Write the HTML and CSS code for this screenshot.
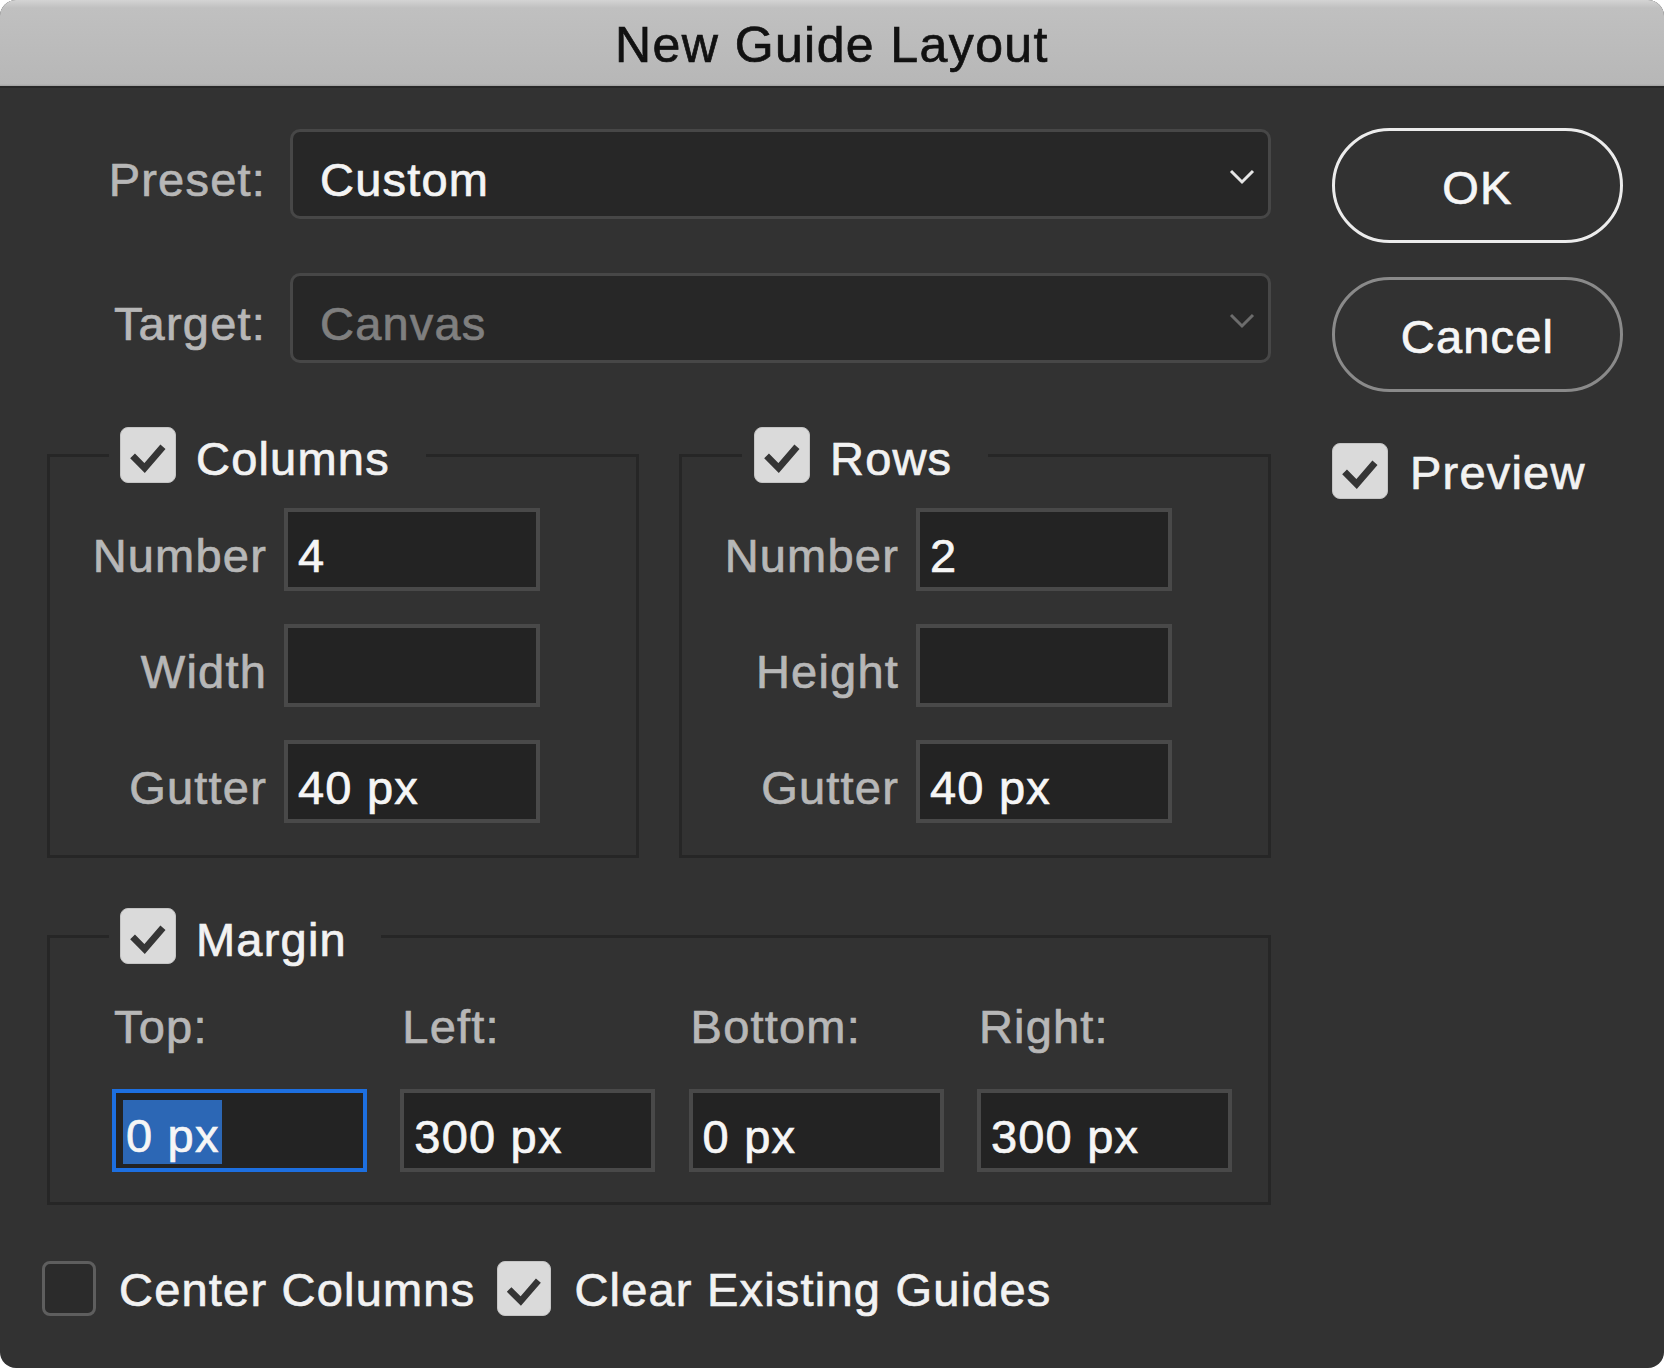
FILE: index.html
```html
<!DOCTYPE html>
<html lang="en">
<head>
<meta charset="utf-8">
<title>New Guide Layout</title>
<link rel="stylesheet" href="styles.css">
</head>
<body>
<div class="dialog">
  <div class="titlebar">New Guide Layout</div>
  <div class="content">
    <div class="main">
      <div class="form-row">
        <div class="label txt">Preset:</div>
        <div class="select">
          <span class="value txt">Custom</span>
          <svg class="chev" width="26" height="17" viewBox="0 0 26 17"><path d="M2 3 L13 14 L24 3" fill="none" stroke="#e6e6e6" stroke-width="3"/></svg>
        </div>
      </div>
      <div class="form-row target">
        <div class="label txt">Target:</div>
        <div class="select disabled">
          <span class="value txt">Canvas</span>
          <svg class="chev" width="26" height="17" viewBox="0 0 26 17"><path d="M2 3 L13 14 L24 3" fill="none" stroke="#6c6c6c" stroke-width="3"/></svg>
        </div>
      </div>

      <div class="groups">
        <fieldset class="group">
          <legend class="legend-cols">
            <span class="legend-inner">
              <span class="cb checked"><svg viewBox="0 0 56 56"><path d="M12 29 L24.5 41.5 L43.5 19.5" fill="none" stroke="#353535" stroke-width="7"/></svg></span>
              <span class="head txt">Columns</span>
            </span>
          </legend>
          <div class="group-body">
            <div class="label txt">Number</div><div class="field"><span class="txt">4</span></div>
            <div class="label txt">Width</div><div class="field"></div>
            <div class="label txt">Gutter</div><div class="field"><span class="txt">40 px</span></div>
          </div>
        </fieldset>
        <fieldset class="group">
          <legend class="legend-rows">
            <span class="legend-inner">
              <span class="cb checked"><svg viewBox="0 0 56 56"><path d="M12 29 L24.5 41.5 L43.5 19.5" fill="none" stroke="#353535" stroke-width="7"/></svg></span>
              <span class="head txt">Rows</span>
            </span>
          </legend>
          <div class="group-body">
            <div class="label txt">Number</div><div class="field"><span class="txt">2</span></div>
            <div class="label txt">Height</div><div class="field"></div>
            <div class="label txt">Gutter</div><div class="field"><span class="txt">40 px</span></div>
          </div>
        </fieldset>
      </div>

      <fieldset class="group margin-group">
        <legend class="legend-margin">
          <span class="legend-inner">
            <span class="cb checked"><svg viewBox="0 0 56 56"><path d="M12 29 L24.5 41.5 L43.5 19.5" fill="none" stroke="#353535" stroke-width="7"/></svg></span>
            <span class="head txt">Margin</span>
          </span>
        </legend>
        <div class="margin-body">
          <div class="mlabel txt">Top:</div>
          <div class="mlabel txt">Left:</div>
          <div class="mlabel txt">Bottom:</div>
          <div class="mlabel txt">Right:</div>
          <div class="field focused"><span class="sel">0 px</span></div>
          <div class="field"><span class="txt">300 px</span></div>
          <div class="field"><span class="txt">0 px</span></div>
          <div class="field"><span class="txt">300 px</span></div>
        </div>
      </fieldset>

      <div class="bottom-row">
        <span class="cb small"></span>
        <span class="opt txt">Center Columns</span>
        <span class="cb small checked"><svg viewBox="0 0 56 56"><path d="M12 29 L24.5 41.5 L43.5 19.5" fill="none" stroke="#353535" stroke-width="7"/></svg></span>
        <span class="opt txt">Clear Existing Guides</span>
      </div>
    </div>

    <div class="side">
      <div class="btn primary"><span class="txt">OK</span></div>
      <div class="btn secondary"><span class="txt">Cancel</span></div>
      <div class="preview">
        <span class="cb checked"><svg viewBox="0 0 56 56"><path d="M12 29 L24.5 41.5 L43.5 19.5" fill="none" stroke="#353535" stroke-width="7"/></svg></span>
        <span class="opt txt">Preview</span>
      </div>
    </div>
  </div>
</div>
</body>
</html>
```

FILE: styles.css
```css
* { box-sizing: border-box; }

html, body {
  margin: 0;
  padding: 0;
  background: #ffffff;
}

body {
  font-family: "Liberation Sans", Arial, sans-serif;
  font-size: 47px;
  letter-spacing: 1.2px;
  color: #f0f0f0;
  -webkit-text-stroke: 0.7px currentColor;
}

.dialog {
  width: 1664px;
  height: 1368px;
  border-radius: 16px;
  overflow: hidden;
  background: #323232;
}

.titlebar {
  height: 88px;
  padding-top: 4px;
  line-height: 82px;
  text-align: center;
  font-size: 50px;
  letter-spacing: 1.4px;
  color: #111111;
  background: linear-gradient(to bottom, #d4d4d4 0px, #c0c0c0 8px, #b7b7b7 84px, #a0a0a0 86px);
  border-bottom: 2px solid #282828;
}

.content {
  display: flex;
  gap: 61px;
  padding: 40px 0 0 42px;
}

.main {
  width: 1229px;
  padding-top: 1px;
  display: flex;
  flex-direction: column;
}

.txt {
  line-height: 56px;
  white-space: nowrap;
}

.label {
  color: #b7b7b7;
  text-align: right;
  padding-top: 12px;
}

.form-row {
  display: grid;
  grid-template-columns: 224px 981px;
  column-gap: 24px;
  align-items: center;
}

.form-row.target {
  margin-top: 54px;
}

.select {
  height: 90px;
  border: 3px solid #474747;
  border-radius: 10px;
  background: #272727;
  display: flex;
  align-items: center;
  justify-content: space-between;
  padding: 0 13px 0 27px;
}

.select .value {
  padding-top: 12px;
  color: #f4f4f4;
}

.select.disabled .value {
  color: #7f7f7f;
}

.chev {
  display: block;
  margin-top: 5px;
}

.groups {
  margin: 64px 0 0 5px;
  display: grid;
  grid-template-columns: 592px 592px;
  column-gap: 40px;
}

fieldset.group {
  margin: 0;
  padding: 0;
  min-width: 0;
  border: 3px solid #262626;
}

legend {
  padding: 0;
}

.legend-cols { margin-left: 59px; padding: 0 36px 0 11px; }
.legend-rows { margin-left: 60px; padding: 0 36px 0 12px; }
.legend-margin { margin-left: 59px; padding: 0 34px 0 11px; }

.legend-inner {
  display: flex;
  align-items: center;
  gap: 20px;
  height: 56px;
}

.head {
  padding-top: 8px;
  color: #f2f2f2;
}

.cb {
  display: block;
  flex: none;
  width: 56px;
  height: 56px;
  border-radius: 8px;
  background: #2b2b2b;
  border: 3px solid #5e5e5e;
}

.cb.checked {
  background: #dadada;
  border: 1px solid #c4c4c4;
}

.cb svg {
  display: block;
  width: 100%;
  height: 100%;
}

.cb.small {
  width: 54px;
  height: 55px;
}

.group-body {
  display: grid;
  grid-template-columns: 217px 256px;
  column-gap: 17px;
  row-gap: 33px;
  align-items: center;
  padding: 25px 0 32px 0;
}

.field {
  height: 83px;
  border: 4px solid #494949;
  background: #232323;
  display: flex;
  align-items: center;
  padding-left: 10px;
  color: #f6f6f6;
}

.field .txt {
  padding-top: 12px;
}

fieldset.margin-group {
  margin: 50px 0 0 5px;
  width: 1224px;
}

.margin-body {
  display: grid;
  grid-template-columns: repeat(4, 255px);
  column-gap: 33.3px;
  row-gap: 34px;
  padding: 35px 0 30px 62px;
}

.mlabel {
  color: #b7b7b7;
  padding-left: 2px;
}

.field.focused {
  border-color: #1d6fe0;
  align-items: flex-start;
  padding-left: 7px;
  padding-top: 7px;
}

.sel {
  display: inline-block;
  height: 64px;
  line-height: 72px;
  padding: 0 2px 0 3px;
  background: #2c67b5;
  color: #f6f6f6;
  white-space: nowrap;
}

.bottom-row {
  margin-top: 53px;
  display: flex;
  align-items: center;
}

.bottom-row .opt {
  padding-top: 4px;
  color: #f2f2f2;
}

.bottom-row .opt:nth-child(2) {
  margin: 0 22px 0 23px;
}

.bottom-row .opt:nth-child(4) {
  margin-left: 23px;
}

.side {
  width: 291px;
  display: flex;
  flex-direction: column;
}

.btn {
  height: 115px;
  border-radius: 58px;
  display: flex;
  align-items: center;
  justify-content: center;
  color: #f6f6f6;
}

.btn .txt {
  padding-top: 5px;
}

.btn.primary {
  border: 3px solid #ececec;
}

.btn.secondary {
  margin-top: 34px;
  border: 3px solid #8a8a8a;
}

.preview {
  margin-top: 48px;
  display: flex;
  align-items: center;
  gap: 22px;
}

.preview .opt {
  padding-top: 5px;
  color: #f2f2f2;
}
```
